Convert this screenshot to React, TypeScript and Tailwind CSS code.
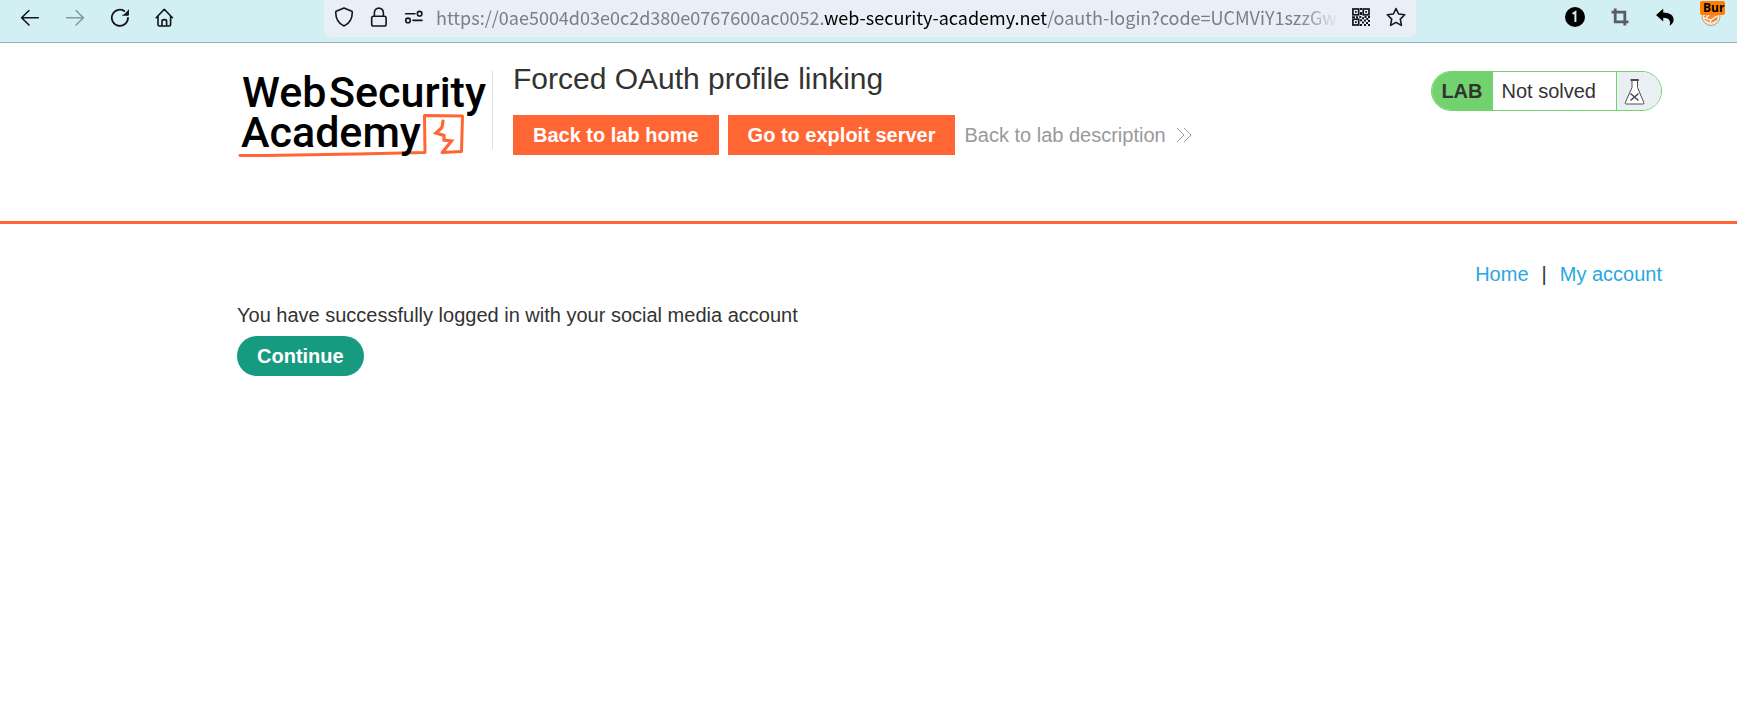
import type { ReactNode } from 'react';

function Icon({ children, label, className = '' }: { children: ReactNode; label: string; className?: string }) {
  return (
    <button type="button" aria-label={label} className={`h-5 shrink-0 ${className}`}>
      <svg
        width="20"
        height="20"
        viewBox="0 0 20 20"
        fill="none"
        stroke="currentColor"
        strokeWidth="1.6"
        strokeLinecap="round"
        strokeLinejoin="round"
        aria-hidden="true"
      >
        {children}
      </svg>
    </button>
  );
}

function BrowserBar() {
  return (
    <div className="flex h-[43px] items-start border-b border-[#9aacb1] bg-[#d2eff3] text-[#15141a]">
      <nav aria-label="Browser" className="flex w-[324px] shrink-0 gap-[25px] pt-2 pl-5">
        <Icon label="Back">
          <path d="M18.3 9.7H1.8M9 2.5L1.6 9.7L9 17" />
        </Icon>
        <Icon label="Forward" className="text-[#859a9e]">
          <path d="M1.7 9.7H18.2M11 2.5L18.4 9.7L11 17" />
        </Icon>
        <Icon label="Reload">
          <path d="M18 9.8A8.1 8.1 0 1 1 14.3 3" strokeWidth="1.8" />
          <path d="M18.4 2V7.2H13.2Z" fill="currentColor" stroke="none" />
          <path d="M18.4 2V7.2H12.6" strokeWidth="1" />
        </Icon>
        <Icon label="Home">
          <path d="M1.2 9.7L9.3 1.3L17.4 9.7M3 8.3V16.3Q3 18 4.7 18H13.9Q15.6 18 15.6 16.3V8.3M7 18V13.2Q7 11.6 9.3 11.6Q11.6 11.6 11.6 13.2V18" />
        </Icon>
      </nav>

      <div className="flex h-[37px] min-w-0 flex-1 items-start rounded-b-md bg-[#e8eff6] px-[10px]">
        <div className="flex shrink-0 gap-[15px] pt-[7px]">
          <Icon label="Tracking protection">
            <path d="M10 1L17.8 4.2Q18.3 4.5 18.3 5.2C18.3 11.5 15.5 16.4 10 19C4.5 16.4 1.7 11.5 1.7 5.2Q1.7 4.5 2.2 4.2Z" />
          </Icon>
          <Icon label="Connection is secure">
            <rect x="2.7" y="9.3" width="14.4" height="9.7" rx="1.8" />
            <path d="M5.4 9V5.6A4.5 4.5 0 0 1 14.4 5.6V9" />
          </Icon>
          <Icon label="Site permissions">
            <path d="M1.6 6.7H11M9 13.4H18" />
            <circle cx="15.6" cy="6.7" r="2.3" />
            <circle cx="4" cy="13.4" r="2.3" />
          </Icon>
        </div>
        <div
          role="textbox"
          aria-label="Address"
          tabIndex={0}
          className="ml-3 min-w-0 flex-1 overflow-hidden font-['Noto_Sans_CJK_SC','Noto_Sans',sans-serif] text-[18px] leading-[34px] whitespace-nowrap text-[#7b7f83] [mask-image:linear-gradient(to_left,transparent,black_40px)]"
        >
          https://0ae5004d03e0c2d380e0767600ac0052.<span className="text-black">web-security-academy.net</span>
          /oauth-login?code=UCMViY1szzGw3
        </div>
        <div className="ml-3 flex shrink-0 gap-[15px] pt-[7px]">
          <Icon label="QR code">
            <g strokeWidth="1.7" strokeLinecap="butt" strokeLinejoin="miter">
              <rect x="1.9" y="2" width="5.8" height="5.8" />
              <rect x="12.2" y="2" width="5.8" height="5.8" />
              <rect x="1.9" y="12.2" width="5.8" height="5.8" />
            </g>
            <g fill="currentColor" stroke="none">
              <path d="M4 4h1.7v1.7H4zM14.3 4h1.7v1.7h-1.7zM4 14.2h1.7v1.7H4z" />
              <path d="M9 1h2v2H9zM9 5h2v3H9zM1 9.3h3v1.6H1zM5 9.3h2v2H5zM8.3 9h2v2h-2zM11 10.3h2v2h-2zM13.5 9h2v2h-2zM17 9h2v2h-2zM15.3 11h2v2h-2zM9 12.3h2v2H9zM13 12.5h2v2h-2zM17 13h2v2h-2zM11 14.5h2v2h-2zM15 15h2v2h-2zM9 17h2v2H9zM13 17h2v2h-2zM17 17h2v2h-2z" />
            </g>
          </Icon>
          <Icon label="Bookmark this page">
            <path d="M10 1.5L12.6 7L18.7 7.8L14.3 12.1L15.4 18.4L10 15.4L4.6 18.4L5.7 12.1L1.3 7.8L7.4 7Z" />
          </Icon>
        </div>
      </div>

      <div className="flex w-[321px] shrink-0 justify-end gap-[25px] pr-[11px]">
        <button type="button" aria-label="1 item" className="mt-[7px] h-5 w-5">
          <svg width="20" height="20" viewBox="0 0 20 20" aria-hidden="true">
            <circle cx="10" cy="10" r="10" fill="#000" />
            <path d="M7.6 6.8L10.4 5V15" fill="none" stroke="#d2eff3" strokeWidth="2" />
          </svg>
        </button>
        <button type="button" aria-label="Capture" className="mt-[7px] h-5 w-5 text-[#5b5b66]">
          <svg width="20" height="20" viewBox="0 0 20 20" fill="none" stroke="currentColor" strokeWidth="2.8" aria-hidden="true">
            <path d="M1.5 5.2H14.8V18.5M5.2 1.5V14.8H18.5" />
          </svg>
        </button>
        <button type="button" aria-label="Undo" className="mt-[7px] h-5 w-5 text-black">
          <svg width="20" height="20" viewBox="0 0 20 20" fill="currentColor" aria-hidden="true">
            <path d="M1 8L8.2 1.8V5.5C14.5 5.6 19 8.2 18.6 13.2C18.4 15.8 16.6 17.6 14.5 18.8C16.3 13.8 14 10.8 8.2 10.8V14.4Z" />
          </svg>
        </button>
        <button type="button" aria-label="Burp proxy" className="h-[27px] w-[26px]">
          <svg width="26" height="27" viewBox="0 0 26 27" aria-hidden="true">
            <circle cx="11" cy="16.5" r="9" fill="#fbe3cc" stroke="#a5a5a5" strokeWidth="1" />
            <path d="M4 16L10 14H18L17 20L11 23L5 20Z" fill="#f28a35" />
            <path d="M4 18L11 20L17 16M11 20L10 23M9 15L6 18" stroke="#fff" strokeWidth="1.2" fill="none" />
            <rect x="0" y="1" width="25" height="14" rx="2" fill="#ff7f00" />
            <text x="3" y="12" fill="#000" className="font-['Open_Sans',sans-serif] text-[12px] font-bold">
              Bur
            </text>
          </svg>
        </button>
      </div>
    </div>
  );
}

function Logo() {
  return (
    <svg width="255" height="99" viewBox="0 0 255 99" role="img" aria-label="Web Security Academy">
      <g fill="none" stroke="#ff6633" strokeLinejoin="round" strokeLinecap="round">
        <path d="M3 94.5C40 95 90 93 120 93L188 91.5L187.5 54.5L225.5 55L224.5 90.5L205 91.5" strokeWidth="3" />
        <path d="M206 60L205 66.5L199 72L207 74.5V79L214.5 80L206 90.5" strokeWidth="3.2" strokeLinejoin="miter" />
      </g>
      <g fill="#000" className="font-['Roboto',sans-serif] text-[43px] font-medium">
        <text x="5" y="46">Web</text>
        <text x="92" y="46">Security</text>
        <text x="4" y="86">Academy</text>
      </g>
    </svg>
  );
}

function LabStatus() {
  return (
    <div className="mt-[28px] flex h-10 shrink-0 overflow-hidden rounded-[20px] border border-[#71d26e] text-[20px] leading-[38px]">
      <strong className="bg-[#71d26e] pr-[10px] pl-[9px]">LAB</strong>
      <p className="border-r border-[#71d26e] pr-5 pl-[9px]">Not solved</p>
      <div className="w-[44px] bg-[#e9eff3] pt-[7px] pl-[7px]">
        <svg width="22" height="26" viewBox="0 0 22 26" fill="#fff" stroke="#4a4f54" strokeWidth="1" aria-hidden="true">
          <path d="M8 1.5V8.5L1.3 23.5Q1 25 2 25H19Q20.5 25 19.8 23.5L13.5 8.5V1.5" />
          <path d="M6.5 1H14.8" strokeWidth="2" />
          <path d="M6.5 14.5L14.5 21.5M14.5 14.5L6.5 21.5" strokeWidth="1.6" />
        </svg>
      </div>
    </div>
  );
}

export default function App() {
  return (
    <div className="min-h-screen bg-white font-['Liberation_Sans',Arial,sans-serif] text-[20px] text-[#333332]">
      <BrowserBar />
      <header className="flex h-[181px] items-start border-b-3 border-[#ff6633] pr-[75px] pl-[237px]">
        <div className="shrink-0 pt-[18px]">
          <Logo />
        </div>
        <div className="mt-[28px] h-[78px] w-px shrink-0 bg-[#dddddd]" />
        <div className="min-w-0 flex-1 pt-[18px] pl-5">
          <h1 className="text-[30px] leading-[36px]">Forced OAuth profile linking</h1>
          <div className="mt-[18px] flex items-center leading-[40px]">
            <a href="#home" className="mr-[9px] bg-[#ff6633] px-5 font-bold text-white">
              Back to lab home
            </a>
            <a href="#exploit" className="mr-[9px] bg-[#ff6633] px-5 font-bold text-white">
              Go to exploit server
            </a>
            <a href="#description" className="flex items-center gap-[10px] text-[#999999]">
              Back to lab description
              <svg width="16" height="16" viewBox="0 0 16 16" fill="none" stroke="currentColor" strokeWidth="1" aria-hidden="true">
                <path d="M1 1L8 8L1 15M8 1L15 8L8 15" />
              </svg>
            </a>
          </div>
        </div>
        <LabStatus />
      </header>
      <main className="pt-[36px] pr-[75px] pl-[237px]">
        <nav aria-label="Account" className="flex justify-end gap-[13px] leading-[28px]">
          <a href="#" className="text-[#29a7df]">Home</a>
          <span>|</span>
          <a href="#account" className="text-[#29a7df]">My account</a>
        </nav>
        <p className="mt-[13px] leading-[28px]">You have successfully logged in with your social media account</p>
        <a href="#continue" className="mt-[7px] inline-block rounded-full bg-[#179b80] px-5 leading-[40px] font-bold text-white">
          Continue
        </a>
      </main>
    </div>
  );
}
